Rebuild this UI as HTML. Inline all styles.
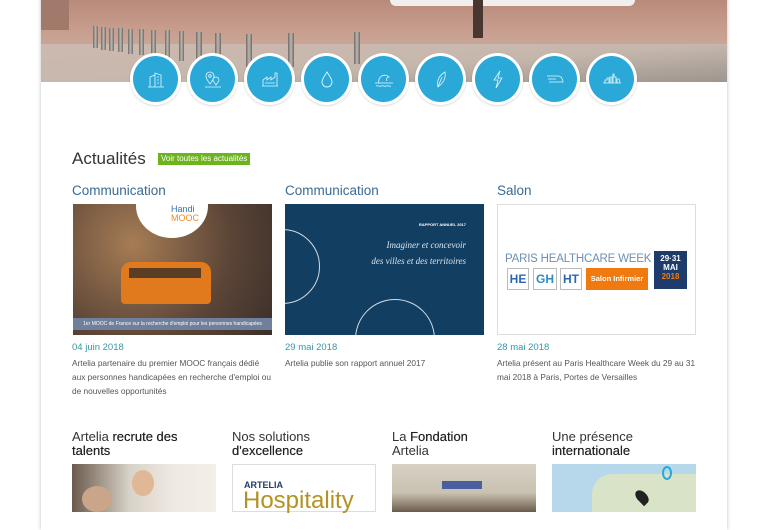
<!DOCTYPE html>
<html><head><meta charset="utf-8"><style>
*{margin:0;padding:0;box-sizing:border-box}
body{width:768px;height:512px;overflow:hidden;background:#fff;font-family:"Liberation Sans",sans-serif;position:relative}
.page{position:absolute;left:41px;top:-10px;width:686px;height:540px;background:#fff;box-shadow:0 0 4px rgba(0,0,0,.25)}
.in{position:absolute;left:0;top:10px;width:686px;height:512px}
.hero{position:absolute;left:0;top:0;width:686px;height:82px;background:linear-gradient(180deg,#b98a7a 0%,#c79d8d 35%,#c9a697 55%,#c7b5aa 70%,#a9a29c 88%,#7f7b77 100%);overflow:hidden}
.wallL{position:absolute;left:0;top:0;width:28px;height:30px;background:#a27a6c}
.box{position:absolute;left:349px;top:0;width:245px;height:6px;background:#f1efed;border-radius:0 0 8px 8px}
.door{position:absolute;left:432px;top:0;width:10px;height:38px;background:#4a3630}
.post{position:absolute;width:5px;background:linear-gradient(90deg,#6f6a66,#bdb7b0,#6f6a66)}
.circ{position:absolute;top:53px;width:51px;height:52px;border-radius:50%;background:#2aa9d9;border:3px solid #fff;box-shadow:0 1px 2px rgba(0,0,0,.15)}
.circ svg{position:absolute;left:12px;top:12px}
h2{position:absolute;font-weight:normal;font-size:17px;color:#333;left:31px;top:149px}
.btn{position:absolute;left:117px;top:153px;background:#6cb31d;color:#fff;font-size:8px;padding:1px 3px;line-height:10px}
.cat{position:absolute;top:183px;font-size:13.5px;color:#3a6a96}
.img{position:absolute;top:204px;width:199px;height:131px}
.date{position:absolute;top:342px;font-size:9.5px;color:#3399a8}
.txt{position:absolute;top:356px;font-size:8.3px;line-height:14px;color:#555;width:200px}
.h3{position:absolute;top:430px;font-size:13px;line-height:14px;color:#333}
.h3 b{font-weight:normal;color:#222;text-shadow:0 0 0.4px #222}
.bi{position:absolute;top:464px;width:144px;height:48px}
</style></head><body>
<div class="page"><div class="in">
 <div class="hero">
  <div class="wallL"></div>
  <div class="box"></div><div class="door"></div>
  <div style="position:absolute;left:0;top:44px;width:686px;height:38px;background:linear-gradient(176deg,#cdb9ae 0%,#c6b7ad 55%,#9d968f 100%)"></div>
  <div class="post" style="left:52px;top:26px;height:22px"></div>
  <div class="post" style="left:60px;top:27px;height:23px"></div>
  <div class="post" style="left:68px;top:28px;height:23px"></div>
  <div class="post" style="left:77px;top:28px;height:24px"></div>
  <div class="post" style="left:87px;top:29px;height:25px"></div>
  <div class="post" style="left:98px;top:29px;height:26px"></div>
  <div class="post" style="left:110px;top:30px;height:28px"></div>
  <div class="post" style="left:124px;top:30px;height:30px"></div>
  <div class="post" style="left:138px;top:31px;height:30px"></div>
  <div class="post" style="left:155px;top:32px;height:32px;width:6px"></div>
  <div class="post" style="left:174px;top:33px;height:33px;width:6px"></div>
  <div class="post" style="left:205px;top:34px;height:33px;width:6px"></div>
  <div class="post" style="left:247px;top:33px;height:34px;width:6px"></div>
  <div class="post" style="left:313px;top:32px;height:32px;width:6px"></div>
 </div>
 <div class="circ" style="left:89px"><svg width="22" height="22" fill="none" stroke="#e6f5fb" stroke-width=".8"><path d="M3 19h16M5 19V9l5-2v12M10 19V5l6 2v12M12 9h2M12 12h2M12 15h2"/></svg></div>
 <div class="circ" style="left:146px"><svg width="22" height="22" fill="none" stroke="#e6f5fb" stroke-width=".8"><path d="M3 19h16M8 16c-3-4-4-6-4-8a4 4 0 018 0c0 2-1 4-4 8zM14 17c-2-3-3-4-3-5a3 3 0 016 0c0 1-1 2-3 5z"/><circle cx="8" cy="8" r="1.3"/></svg></div>
 <div class="circ" style="left:203px"><svg width="22" height="22" fill="none" stroke="#e6f5fb" stroke-width=".8"><path d="M3 18h16M4 18v-6l4-3v3l4-3v3l4-3V5h2v13M6 15h10"/></svg></div>
 <div class="circ" style="left:260px"><svg width="22" height="22" fill="none" stroke="#e6f5fb" stroke-width=".9"><path d="M11 4c-3 5-5 7-5 10a5 5 0 0010 0c0-3-2-5-5-10z"/></svg></div>
 <div class="circ" style="left:317px"><svg width="22" height="22" fill="none" stroke="#e6f5fb" stroke-width=".8"><path d="M2 15h18M3 18c2-1 3 1 5 0s3 1 5 0 3 1 5 0M6 15a6 6 0 0110-6c-2 0-3 2-2 4"/></svg></div>
 <div class="circ" style="left:374px"><svg width="22" height="22" fill="none" stroke="#e6f5fb" stroke-width=".8"><path d="M8 19c-1-5 0-11 7-15 1 7-2 11-7 15zM8 19l4-10"/></svg></div>
 <div class="circ" style="left:431px"><svg width="22" height="22" fill="none" stroke="#e6f5fb" stroke-width=".8"><path d="M13 3l-6 9h4l-2 8 6-10h-4z"/></svg></div>
 <div class="circ" style="left:488px"><svg width="22" height="22" fill="none" stroke="#e6f5fb" stroke-width=".8"><path d="M3 8h9M4 11h8M5 14h7M8 8h6c3 0 5 3 5 6H8"/></svg></div>
 <div class="circ" style="left:545px"><svg width="22" height="22" fill="none" stroke="#e6f5fb" stroke-width=".8"><path d="M2 15h18M4 15v-3h2v-2h2v5M9 15V9h2v6M12 15V6h1v3h2v6M16 15v-4h2l1 4"/></svg></div>

 <h2>Actualités</h2>
 <div class="btn">Voir toutes les actualités</div>

 <div class="cat" style="left:31px">Communication</div>
 <div class="cat" style="left:244px">Communication</div>
 <div class="cat" style="left:456px">Salon</div>

 <div class="img" style="left:32px;background:radial-gradient(circle at 30% 30%,#a67c55,#5a4436 60%,#3b2f2a);overflow:hidden">
  <div style="position:absolute;left:63px;top:-30px;width:72px;height:64px;border-radius:50%;background:#fff"></div>
  <div style="position:absolute;left:98px;top:1px;font-size:9px;color:#3a6fa8;line-height:9px">Handi<br><span style="color:#f08a24">MOOC</span></div>
  <div style="position:absolute;left:48px;top:58px;width:90px;height:42px;background:#e17a1d;border-radius:10px 10px 4px 4px"></div>
  <div style="position:absolute;left:56px;top:64px;width:72px;height:10px;background:#5b3d25"></div>
  <div style="position:absolute;left:0;top:114px;width:199px;height:12px;background:#6f7f9c;color:#fff;font-size:5px;line-height:12px;text-align:center">1er MOOC de France sur la recherche d'emploi pour les personnes handicapées</div>
 </div>
 <div class="img" style="left:244px;background:#123e62;overflow:hidden">
  <div style="position:absolute;left:-40px;top:25px;width:75px;height:75px;border:1.5px solid #cfdbe6;border-radius:50%"></div>
  <div style="position:absolute;left:70px;top:95px;width:80px;height:80px;border:1.5px solid #cfdbe6;border-radius:50%"></div>
  <div style="position:absolute;right:18px;top:18px;font-size:4px;color:#fff;font-weight:bold">RAPPORT ANNUEL 2017</div>
  <div style="position:absolute;right:18px;top:33px;font-size:9px;color:#dce6ee;font-style:italic;font-family:'Liberation Serif',serif;text-align:right;line-height:16px">Imaginer et concevoir<br>des villes et des territoires</div>
 </div>
 <div class="img" style="left:456px;background:#fff;border:1px solid #ddd">
  <div style="position:absolute;left:7px;top:48px;font-size:11.5px;color:#6c8fb3;letter-spacing:-.2px">PARIS HEALTHCARE WEEK</div>
  <div style="position:absolute;left:9px;top:63px;width:22px;height:22px;border:1px solid #bbb;font-size:12px;font-weight:bold;color:#2e67b1;text-align:center;line-height:20px">HE</div>
  <div style="position:absolute;left:35px;top:63px;width:24px;height:22px;border:1px solid #bbb;font-size:12px;font-weight:bold;color:#2e8bc9;text-align:center;line-height:20px">GH</div>
  <div style="position:absolute;left:62px;top:63px;width:22px;height:22px;border:1px solid #bbb;font-size:12px;font-weight:bold;color:#2e67b1;text-align:center;line-height:20px">HT</div>
  <div style="position:absolute;left:88px;top:63px;width:62px;height:22px;background:#f07a10;color:#fff;font-size:7.5px;font-weight:bold;text-align:center;line-height:22px">Salon Infirmier</div>
  <div style="position:absolute;left:156px;top:46px;width:33px;height:38px;background:#1d3c6b;color:#fff;font-size:8px;font-weight:bold;text-align:center;line-height:9px;padding-top:3px">29·31<br>MAI<br><span style="color:#f07a10">2018</span></div>
 </div>

 <div class="date" style="left:31px">04 juin 2018</div>
 <div class="date" style="left:244px">29 mai 2018</div>
 <div class="date" style="left:456px">28 mai 2018</div>
 <div class="txt" style="left:31px">Artelia partenaire du premier MOOC français dédié aux personnes handicapées en recherche d'emploi ou de nouvelles opportunités</div>
 <div class="txt" style="left:244px">Artelia publie son rapport annuel 2017</div>
 <div class="txt" style="left:456px">Artelia présent au Paris Healthcare Week du 29 au 31 mai 2018 à Paris, Portes de Versailles</div>

 <div class="h3" style="left:31px">Artelia <b>recrute des</b><br><b>talents</b></div>
 <div class="h3" style="left:191px">Nos solutions<br><b>d'excellence</b></div>
 <div class="h3" style="left:351px">La <b>Fondation</b><br>Artelia</div>
 <div class="h3" style="left:511px">Une présence<br><b>internationale</b></div>

 <div class="bi" style="left:31px;background:linear-gradient(90deg,#6b5a4c,#d8d2c8 40%,#eee9e2 70%,#f3efe8)">
  <div style="position:absolute;left:60px;top:6px;width:22px;height:26px;border-radius:50%;background:#e0b896"></div>
  <div style="position:absolute;left:10px;top:22px;width:30px;height:26px;border-radius:50%;background:#caa58a"></div>
 </div>
 <div class="bi" style="left:191px;background:#fff;border:1px solid #ddd">
  <div style="position:absolute;left:11px;top:15px;font-size:9px;font-weight:bold;color:#1d3c6b">ARTELIA</div>
  <div style="position:absolute;left:10px;top:22px;font-size:24px;color:#b39224">Hospitality</div>
 </div>
 <div class="bi" style="left:351px;background:linear-gradient(180deg,#d6d1c4,#c9c2b1 60%,#6c5c4c)">
  <div style="position:absolute;left:50px;top:17px;width:40px;height:8px;background:#4a5ea0"></div>
 </div>
 <div class="bi" style="left:511px;background:#b7d8ea">
  <div style="position:absolute;left:40px;top:10px;width:104px;height:38px;background:#d9e3c8;border-radius:20px 0 0 0"></div>
  <div style="position:absolute;left:85px;top:25px;width:10px;height:16px;background:#222;border-radius:50% 50% 50% 0;transform:rotate(-45deg)"></div>
  <div style="position:absolute;left:110px;top:2px;width:10px;height:14px;border:2.5px solid #2aa9d9;border-radius:50%"></div>
 </div>
</div></div>
</body></html>
